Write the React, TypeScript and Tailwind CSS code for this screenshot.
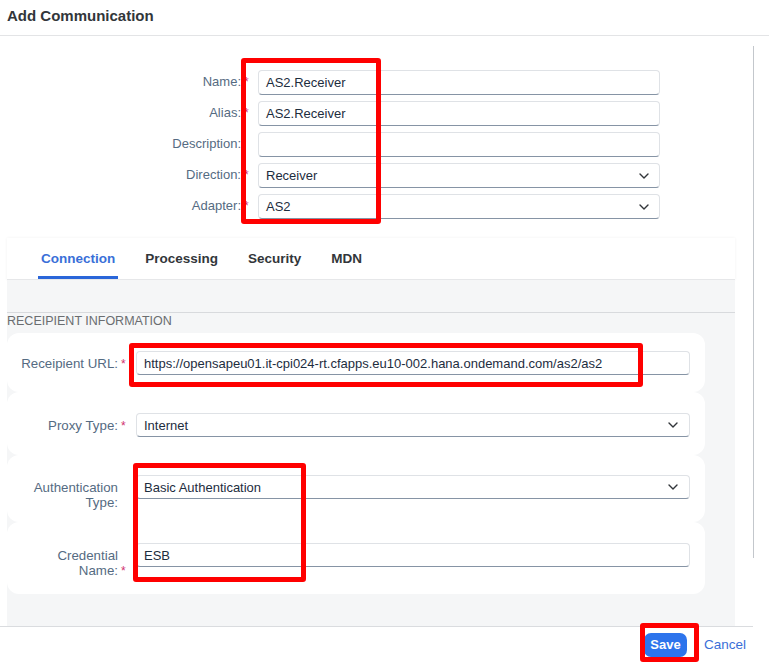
import React from "react";

const Star = () => (
  <span className="inline-block w-[9px] -mr-[9px] pl-[3px] text-left text-[#d0306f] text-[12px]">*</span>
);

const Chevron = () => (
  <svg width="10" height="6" viewBox="0 0 10 6" className="shrink-0">
    <polyline points="1,1 5,5 9,1" fill="none" stroke="#32363a" strokeWidth="1.4" strokeLinecap="round" strokeLinejoin="round" />
  </svg>
);

function Field({ value, select, h = "h-[25px]", chevronPad = "pr-[10px]" }: { value: string; select?: boolean; h?: string; chevronPad?: string }) {
  return (
    <div
      className={`${h} w-full bg-white rounded-[4px] border border-[#dfe2e6] border-b-[#8694a5] flex items-center pl-[7px] ${chevronPad} text-[13px] text-[#1d2d3e] leading-none whitespace-nowrap overflow-hidden`}
    >
      <span className="flex-1">{value}</span>
      {select && <Chevron />}
    </div>
  );
}

function TopRow({ label, req, value, select }: { label: string; req?: boolean; value: string; select?: boolean }) {
  return (
    <>
      <div className="text-right text-[13px] leading-[16px] pt-[4px] text-[#556b82]">
        {label}
        {req && <Star />}
      </div>
      <div />
      <Field value={value} select={select} />
    </>
  );
}

function Card({ h, pt, label, req, value, select }: { h: string; pt: string; label: React.ReactNode; req?: boolean; value: string; select?: boolean }) {
  return (
    <div className={`${h} ${pt} w-[698px] bg-white rounded-[12px] grid grid-cols-[111px_18px_554px] items-start`}>
      <div className="text-right text-[13.3px] leading-[15px] pt-[5px] text-[#556b82]">
        {label}
        {req && <Star />}
      </div>
      <div />
      <Field value={value} select={select} h="h-[24px]" chevronPad="pr-[11px]" />
    </div>
  );
}

export default function App() {
  return (
    <div className="w-[769px] h-[663px] bg-white relative overflow-hidden font-['Liberation_Sans',Arial,sans-serif]">
      <header className="h-[36px] border-b border-[#e3e4e6] flex items-center pl-[7px] pb-[3px]">
        <h1 className="text-[15px] font-bold text-[#32363a]">Add Communication</h1>
      </header>

      <div className="flex h-[590px]">
        <div className="w-[753px] flex flex-col">
          <div className="pt-[34px] grid grid-cols-[241px_17px_402px] gap-y-[6px]">
            <TopRow label="Name:" req value="AS2.Receiver" />
            <TopRow label="Alias:" req value="AS2.Receiver" />
            <TopRow label="Description:" value="" />
            <TopRow label="Direction:" req value="Receiver" select />
            <TopRow label="Adapter:" req value="AS2" select />
          </div>

          <nav className="mt-[19px] ml-[7px] w-[728px] h-[42px] bg-white flex gap-[24px] pl-[31px] border-b border-[#e6e7e9] shadow-[0_0_3px_rgba(0,0,0,0.06)]">
            <div className="h-full flex items-center px-[3px] pt-[5px] border-b-[3px] border-[#2a66d9] text-[13.5px] font-bold text-[#3a6fd8]">Connection</div>
            <div className="h-full flex items-center px-[3px] pt-[5px] border-b-[3px] border-transparent text-[13.5px] font-bold text-[#32363a]">Processing</div>
            <div className="h-full flex items-center px-[3px] pt-[5px] border-b-[3px] border-transparent text-[13.5px] font-bold text-[#32363a]">Security</div>
            <div className="h-full flex items-center px-[3px] pt-[5px] border-b-[3px] border-transparent text-[13.5px] font-bold text-[#32363a]">MDN</div>
          </nav>

          <section className="ml-[7px] w-[728px] flex-1 bg-[#f5f6f7] flex flex-col">
            <div className="mt-[32px] h-px bg-[#d8dadd]" />
            <div className="h-[20px] text-[12.5px] leading-[16px] text-[#6a6d70] uppercase">Receipient Information</div>
            <Card h="h-[59px]" pt="pt-[18px]" label="Receipient URL:" req value="https://opensapeu01.it-cpi024-rt.cfapps.eu10-002.hana.ondemand.com/as2/as2" />
            <Card h="h-[63px]" pt="pt-[21px]" label="Proxy Type:" req value="Internet" select />
            <Card h="h-[67px]" pt="pt-[20px]" label={<>Authentication<br />Type:</>} value="Basic Authentication" select />
            <Card h="h-[72px]" pt="pt-[21px]" label={<>Credential<br />Name:</>} req value="ESB" />
          </section>
        </div>
        <div className="w-px bg-[#c3c7cc] mt-[10px] h-[512px]" />
      </div>

      <footer className="w-[753px] h-[37px] border-t border-[#dadcdf] flex items-center justify-end pr-[7px] gap-[17px]">
        <button className="h-[24px] w-[43px] rounded-[7px] bg-[#2d74ec] text-white text-[13px] font-bold">Save</button>
        <span className="text-[13.5px] text-[#3a6fd8]">Cancel</span>
      </footer>

      {/* annotation boxes */}
      <div className="absolute left-[241px] top-[58px] w-[140px] h-[166px] border-[5px] border-[#ff0000] rounded-[3px] pointer-events-none" />
      <div className="absolute left-[129px] top-[343px] w-[514px] h-[44px] border-[5px] border-[#ff0000] rounded-[3px] pointer-events-none" />
      <div className="absolute left-[133px] top-[463px] w-[173px] h-[119px] border-[5px] border-[#ff0000] rounded-[3px] pointer-events-none" />
      <div className="absolute left-[640px] top-[623px] w-[59px] h-[39px] border-[5px] border-[#ff0000] rounded-[3px] pointer-events-none" />
    </div>
  );
}
